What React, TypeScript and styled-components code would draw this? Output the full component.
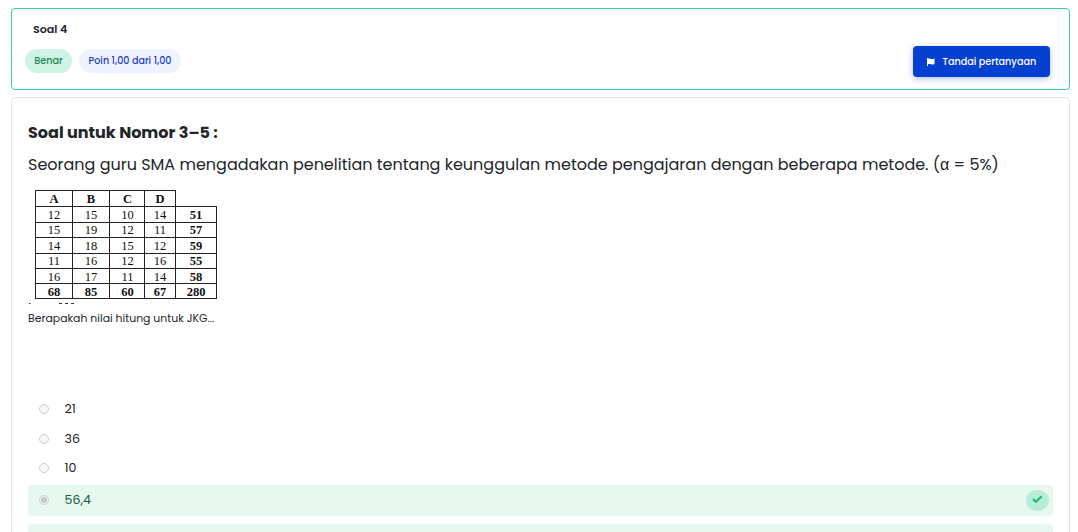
import * as React from "react";
import styled, { createGlobalStyle } from "styled-components";

const COLOR = {
  TEXT: "#212529",
  GREEN: "#39ce94",
  BLUE: "#0540d0",
};

const GlobalStyle = createGlobalStyle`
  * {
    box-sizing: border-box;
  }
  body {
    margin: 0;
    overflow: hidden;
    background: #fff;
    color: ${COLOR.TEXT};
    font-family: Poppins, Inter, sans-serif;
  }
`;

const Page = styled.main`
  height: 532px;
  padding: 8px 8px 0 11px;
  overflow: hidden;
`;

const InfoCard = styled.header`
  display: flex;
  justify-content: space-between;
  height: 82px;
  padding: 0 19px 0 13px;
  border: 1px solid ${COLOR.GREEN};
  border-radius: 4px;
`;

const Title = styled.h3`
  margin: 12px 0 11px 8px;
  font-size: 11.1px;
  line-height: 17px;
  font-weight: 600;
`;

const Badges = styled.div`
  display: flex;
  gap: 7px;
`;

const Badge = styled.span<{ $color: string; $bg: string; $width: number }>`
  width: ${(props) => props.$width}px;
  height: 24px;
  border-radius: 12px;
  background: ${(props) => props.$bg};
  color: ${(props) => props.$color};
  font-size: 9.6px;
  line-height: 24px;
  font-weight: 500;
  text-align: center;
  white-space: nowrap;
`;

const FlagButton = styled.button`
  display: flex;
  align-items: center;
  width: 137px;
  height: 31px;
  margin-top: 37px;
  padding: 0 0 0 14px;
  border: none;
  border-radius: 4px;
  background: ${COLOR.BLUE};
  box-shadow: 0 2px 6px rgba(5, 64, 208, 0.3);
  color: #fff;
  font: 500 9.65px Poppins, Inter, sans-serif;
  white-space: nowrap;
  svg {
    margin-right: 7.5px;
  }
`;

const QuestionCard = styled.section`
  height: 460px;
  margin-top: 7px;
  padding: 23px 16px 0;
  border: 1px solid #e5e5e5;
  border-radius: 4px;
`;

const Heading = styled.h4`
  margin: 0;
  font-size: 16px;
  line-height: 24px;
  font-weight: 700;
`;

const Lead = styled.p`
  margin: 8px 0 0;
  font-size: 16px;
  line-height: 24px;
  white-space: nowrap;
`;

const Greek = styled.span`
  font-family: "Liberation Sans", sans-serif;
  line-height: 1;
`;

const DataTable = styled.table`
  width: 182px;
  margin: 13px 0 0 7px;
  border-collapse: collapse;
  table-layout: fixed;
  font-family: "Liberation Serif", serif;
  font-size: 12.5px;
  line-height: 14px;
  color: #111;
`;

const TRow = styled.tr<{ $height: number }>`
  height: ${(props) => props.$height}px;
  &:nth-last-child(-n + 2) td {
    padding-top: 2px;
    line-height: 12px;
  }
`;

const TCell = styled.td<{ $bold?: boolean; $empty?: boolean }>`
  padding: 0;
  border: ${(props) => (props.$empty ? "none" : "1px solid #222")};
  font-weight: ${(props) => (props.$bold ? 700 : 400)};
  text-align: center;
  vertical-align: middle;
  &:nth-child(3) {
    padding-left: 1px;
  }
`;

const Remnant = styled.svg`
  display: block;
  width: 60px;
  height: 2px;
  margin-top: 3px;
`;

const Prompt = styled.p`
  margin: 6px 0 67px;
  font-size: 10.88px;
  line-height: 17px;
`;

const Answer = styled.label<{ $height: number; $correct?: boolean }>`
  display: flex;
  align-items: center;
  height: ${(props) => props.$height}px;
  margin-top: ${(props) => (props.$correct ? 3 : 0)}px;
  padding: 0 4px 0 11px;
  border-radius: 4px;
  background: ${(props) => (props.$correct ? "#e6f8f0" : "transparent")};
  color: ${(props) => (props.$correct ? "#155c3f" : COLOR.TEXT)};
  font-size: 12.6px;
  line-height: 18px;
`;

const AnswerText = styled.span<{ $correct?: boolean }>`
  padding-bottom: ${(props) => (props.$correct ? 2 : 0)}px;
`;

const Radio = styled.input`
  appearance: none;
  width: 10px;
  height: 10px;
  margin: 0 15.5px 0 0;
  border: 1px solid #cfd0d0;
  border-radius: 50%;
  background: #f8f8f8;
  &:checked {
    margin-top: -1px;
    background: radial-gradient(circle, #c6cbc9 0 2.8px, #eef3f1 3.3px);
  }
`;

const CheckBadge = styled.span`
  display: flex;
  align-items: center;
  justify-content: center;
  width: 23px;
  height: 21px;
  margin-left: auto;
  border-radius: 50%;
  background: #b7edd7;
  svg {
    margin-top: -2px;
  }
`;

const NextAnswer = styled.div`
  height: 31px;
  margin-top: 8px;
  border-radius: 4px;
  background: #e6f8f0;
`;

const rows = [
  ["A", "B", "C", "D", ""],
  ["12", "15", "10", "14", "51"],
  ["15", "19", "12", "11", "57"],
  ["14", "18", "15", "12", "59"],
  ["11", "16", "12", "16", "55"],
  ["16", "17", "11", "14", "58"],
  ["68", "85", "60", "67", "280"],
];
const heights = [16, 16, 15, 16, 15, 15, 15];
const columns = [37, 37, 35, 31, 41];

const answers = [
  { value: "21", height: 30 },
  { value: "36", height: 30 },
  { value: "10", height: 28 },
];

const Table: React.FC = () => (
  <DataTable>
    <colgroup>
      {columns.map((width, i) => (
        <col key={i} width={width} />
      ))}
    </colgroup>
    <tbody>
      {rows.map((row, i) => (
        <TRow key={i} $height={heights[i]}>
          {row.map((data, j) => (
            <TCell key={j} $bold={i === 0 || i === 6 || j === 4} $empty={data === ""}>
              {data}
            </TCell>
          ))}
        </TRow>
      ))}
    </tbody>
  </DataTable>
);

const App: React.FC = () => {
  return (
    <>
      <GlobalStyle />
      <Page>
        <InfoCard>
          <div>
            <Title>Soal 4</Title>
            <Badges>
              <Badge $width={47} $bg="#cff3e4" $color="#198754">Benar</Badge>
              <Badge $width={102} $bg="#eff3ff" $color="#1a3fc4">Poin 1,00 dari 1,00</Badge>
            </Badges>
          </div>
          <FlagButton type="button">
            <svg width="8" height="8" viewBox="0 0 8 8" fill="#fff">
              <path d="M0 0h1v.8c1.200-.6 2.200-.3 3.200.1 1 .4 1.900.2 3.300-.4v5.500c-1.400.7-2.400.6-3.400.2-1-.4-1.900-.5-3.100.1v1.700H0z" />
            </svg>
            Tandai pertanyaan
          </FlagButton>
        </InfoCard>
        <QuestionCard>
          <Heading>Soal untuk Nomor 3–5 :</Heading>
          <Lead>
            Seorang guru SMA mengadakan penelitian tentang keunggulan metode pengajaran dengan beberapa metode. (<Greek>α</Greek> = 5%)
          </Lead>
          <Table />
          <Remnant viewBox="0 0 60 2">
            <path d="M1 1.500h1.500M31 1.500h3M37 1.500h3M43 1.500h3" stroke="#333" />
          </Remnant>
          <Prompt>Berapakah nilai hitung untuk JKG...</Prompt>
          {answers.map(({ value, height }) => (
            <Answer key={value} $height={height}>
              <Radio type="radio" disabled />
              <AnswerText>{value}</AnswerText>
            </Answer>
          ))}
          <Answer $height={31} $correct>
            <Radio type="radio" checked disabled readOnly />
            <AnswerText $correct>56,4</AnswerText>
            <CheckBadge>
              <svg width="11" height="9" viewBox="0 0 11 9" fill="none">
                <path d="M1 4.100l2.900 2.600 5.800-5.500" stroke="#1bbd78" strokeWidth="2.200" />
              </svg>
            </CheckBadge>
          </Answer>
          <NextAnswer />
        </QuestionCard>
      </Page>
    </>
  );
};

export default App;
